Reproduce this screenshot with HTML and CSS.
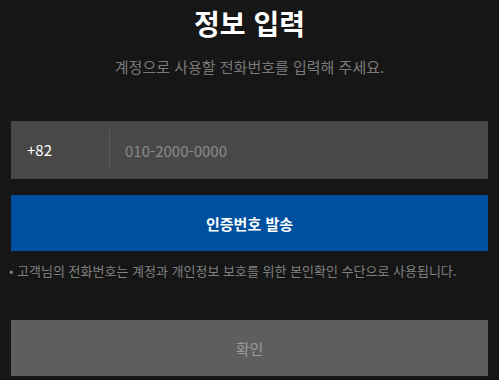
FILE: index.html
```html
<!DOCTYPE html>
<html lang="ko">
<head>
    <meta charset="UTF-8">
    <meta name="viewport" content="width=device-width, initial-scale=1.0">
    <title>정보 입력</title>
    <link rel="stylesheet" href="styles.css">
</head>
<body>
    <div class="container">
        <h1>정보 입력</h1>
        <p class="desc">계정으로 사용할 전화번호를 입력해 주세요.</p>

        <form class="phone-form">
            <div class="phone-field">
                <span class="country-code">+82</span>
                <input type="tel" class="phone-input" placeholder="010-2000-0000">
            </div>

            <button type="button" class="send-btn">인증번호 발송</button>

            <p class="notice">• 고객님의 전화번호는 계정과 개인정보 보호를 위한 본인확인 수단으로 사용됩니다.</p>

            <button type="submit" class="confirm-btn" disabled>확인</button>
        </form>
    </div>
</body>
</html>
```

FILE: styles.css
```css
* {
    margin: 0;
    padding: 0;
    box-sizing: border-box;
}

body {
    font-family: "Noto Sans CJK KR", "Noto Sans", sans-serif;
    background: #161616;
    color: #fff;
}

.container {
    padding: 4px 11px 0;
}

h1 {
    font-size: 28px;
    font-weight: 700;
    line-height: 38px;
    text-align: center;
}

.desc {
    margin-top: 15px;
    font-size: 15px;
    line-height: 20px;
    color: #7a7a7a;
    text-align: center;
}

.phone-form {
    margin-top: 44px;
}

.phone-field {
    display: flex;
    align-items: center;
    height: 58px;
    background: #484848;
}

.country-code {
    width: 99px;
    padding-left: 16px;
    font-size: 15px;
    color: #fff;
    border-right: 1px solid #5c5c5c;
    line-height: 40px;
}

.phone-input {
    flex: 1;
    height: 100%;
    padding: 0 15px;
    font-family: inherit;
    font-size: 15px;
    color: #fff;
    background: transparent;
    border: none;
    outline: none;
}

.phone-input::placeholder {
    color: #8a8a8a;
}

.send-btn,
.confirm-btn {
    display: block;
    width: 100%;
    height: 56px;
    border: none;
    font-family: inherit;
    font-size: 15px;
}

.send-btn {
    margin-top: 16px;
    background: #0050a0;
    color: #fff;
    font-weight: 700;
}

.notice {
    margin-top: 11px;
    margin-left: -2px;
    font-size: 13px;
    line-height: 18px;
    color: #808080;
}

.confirm-btn {
    margin-top: 40px;
    background: #5e5e5e;
    color: #9a9a9a;
}
```
